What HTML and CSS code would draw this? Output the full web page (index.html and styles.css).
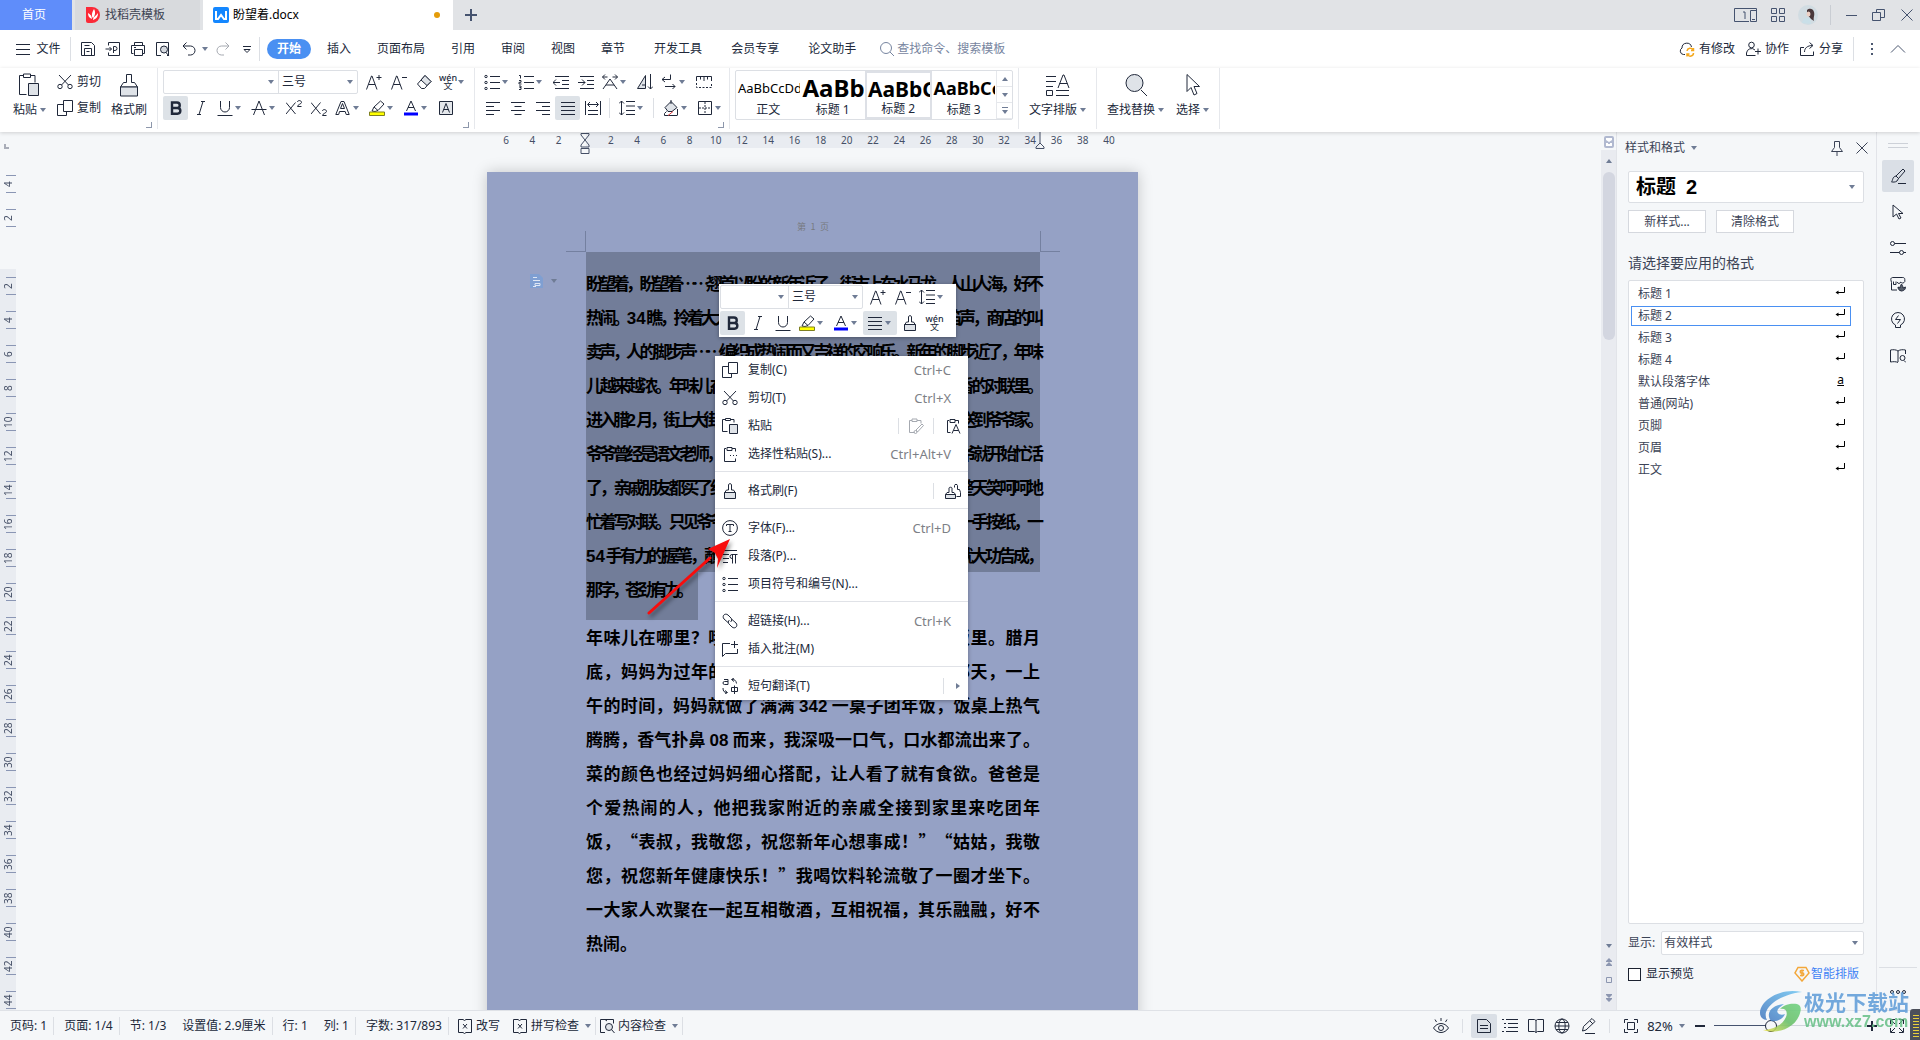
FILE: index.html
```html
<!DOCTYPE html>
<html lang="zh-CN">
<head>
<meta charset="utf-8">
<title>盼望着.docx</title>
<link rel="stylesheet" href="styles.css">
</head>
<body>
<svg class="sprite" aria-hidden="true">
  <symbol id="save" viewBox="0 0 16 16"><path d="M1.5 1.5h10l3 3v10h-13zM4.500 14.500v-7h7v7M4.500 4.500h5M6.500 10.500h3"/></symbol>
  <symbol id="export" viewBox="0 0 16 16"><path d="M3.500 4.500v-3h11v13h-11v-3M.5 8h6M4.500 6l2 2-2 2M8.500 12V5.500h1.500a2 2 0 0 1 0 4H8.500"/></symbol>
  <symbol id="print" viewBox="0 0 16 16"><path d="M4.500 4.500v-3h8v3M3.500 12.500h-2v-8h13v8h-2M4.500 8.500h8v6h-8zM4 6.500h2"/></symbol>
  <symbol id="preview" viewBox="0 0 16 16"><path d="M6 14.500H1.500v-13h12v13H12"/><circle cx="9" cy="8.500" r="3.500" fill="#d5d9df"/><path d="M11 11.500l3 3.500"/></symbol>
  <symbol id="undo" viewBox="0 0 16 16"><path d="M5.500 1.500L2 5l3.500 3.500M2 5h7.500a4.500 4.500 0 0 1 0 9H7"/></symbol>
  <symbol id="redo" viewBox="0 0 16 16"><path d="M10.500 1.500L14 5l-3.500 3.500M14 5H6.500a4.500 4.500 0 0 0 0 9H9"/></symbol>
  <symbol id="more" viewBox="0 0 16 16"><path d="M4 5.500h8M5 8.500h6l-3 3z"/></symbol>
  <symbol id="ham" viewBox="0 0 16 16"><path d="M1 3.500h14M1 8.500h14M1 13.500h14"/></symbol>
  <symbol id="mag" viewBox="0 0 16 16"><circle cx="7" cy="7" r="5.500"/><path d="M11 11l4 4"/></symbol>
  <symbol id="cloud" viewBox="0 0 16 16"><path d="M6 13.500H4.500A3.500 3.500 0 0 1 3 7a4.800 4.800 0 0 1 9.500-1"/><path stroke="#f5a81c" stroke-width="1.500" d="M8 10a3.200 3.200 0 0 1 6-1M14.500 12a3.200 3.200 0 0 1-6 1.500M14.500 7v2.500H12M8 15.500V13h2.500"/></symbol>
  <symbol id="people" viewBox="0 0 16 16"><circle cx="6.500" cy="4" r="2.800"/><path d="M10 9a5 5 0 0 0-8.500 3v2.500h9M13 7.500v6M10 10.500h6"/></symbol>
  <symbol id="share" viewBox="0 0 16 16"><path d="M5 6.500H1.500v8h13v-4M5.500 11c0-4 3-6.500 8-6.500M10.500 1.500l3.500 3-3.500 3"/></symbol>
  <symbol id="dots" viewBox="0 0 16 16"><path stroke-width="2" d="M7 3h2M7 8h2M7 13h2"/></symbol>
  <symbol id="up" viewBox="0 0 16 16"><path d="M1 11.500l7-7 7 7"/></symbol>
  <symbol id="paste" viewBox="0 0 24 24"><path d="M9.500 21.500h-7v-19h4M14 2.500h4v7M6.500 1h7v3.500h-7z"/><path fill="#dfe3e8" d="M11.500 10.500h10v12h-10z"/></symbol>
  <symbol id="paste-s" viewBox="0 0 16 16"><path d="M5.500 13.500h-5v-12h3M9 1.500h3v3M3.500.5h5v2h-5z"/><path fill="#dfe3e8" d="M7.500 6.500h8v9h-8z"/></symbol>
  <symbol id="cut" viewBox="0 0 16 16"><path d="M2 1l9.500 10M14 1L4.500 11"/><circle cx="3" cy="12.500" r="2.200"/><circle cx="13" cy="12.500" r="2.200"/></symbol>
  <symbol id="copy" viewBox="0 0 16 16"><path d="M6.500.5h9v11h-9zM6.500 4.500h-6v11h9v-4"/></symbol>
  <symbol id="brush" viewBox="0 0 24 24"><path d="M9.500 9.500v-8h5v8h3l3 4.500h-17l3-4.500z"/><path fill="#dfe3e8" d="M3.500 14h17v9h-17z"/></symbol>
  <symbol id="brush-s" viewBox="0 0 16 16"><path d="M6.500 7V1.500c0-1 3-1 3 0V7h2l2 3h-11l2-3z"/><path fill="#dfe3e8" d="M2.500 9.500h11v6h-11z"/></symbol>
  <symbol id="brush-2" viewBox="0 0 16 16"><path d="M9.500 4.500v-2c0-1.500 3-1.500 3 0v4h2l1 3v4h-4"/><path fill="#fff" d="M4 9.500V5c0-1 3-1 3 0v4.500h2l1.500 2H.5l1.500-2z"/><path fill="#dfe3e8" d="M.5 11.500h10v4H.5z"/></symbol>
  <symbol id="a-plus" viewBox="0 0 16 16"><path d="M.5 15.500L5.500 2h.5l5 13.500M2.500 10.500h6.500M10.500 3.500h5M13 1v5"/></symbol>
  <symbol id="a-minus" viewBox="0 0 16 16"><path d="M.5 15.500L5.500 2h.5l5 13.500M2.500 10.500h6.500M11 3.500h5"/></symbol>
  <symbol id="eraser" viewBox="0 0 16 16"><path d="M9 1.500L15 7.500 8.500 14.500h-3L1.500 10z"/><path fill="#dfe3e8" d="M9 1.500L15 7.500 11 11.500 5 6z"/></symbol>
  <symbol id="bold" viewBox="0 0 16 16"><path stroke-width="2.400" d="M4 2.500h5a2.700 2.700 0 0 1 0 5.500H4zM4 8h5.500a2.800 2.800 0 0 1 0 5.700H4z"/></symbol>
  <symbol id="italic" viewBox="0 0 16 16"><path d="M8 1.500h4M4 14.500h4M10 1.500L6 14.500"/></symbol>
  <symbol id="under" viewBox="0 0 16 16"><path d="M3.500 1v6.500a4.500 4.500 0 0 0 9 0V1M.5 15.500h15"/></symbol>
  <symbol id="strike" viewBox="0 0 16 16"><path d="M2.500 15L8 1l5.500 14M.5 9.500h15"/></symbol>
  <symbol id="sup" viewBox="0 0 16 16"><path d="M0 2.500L9.500 14M9.500 2.500L0 14M11.500 2c0-2 4-2 4 .5 0 1.500-4 2-4 4h4"/></symbol>
  <symbol id="sub" viewBox="0 0 16 16"><path d="M0 2.500L9.500 14M9.500 2.500L0 14M11.500 11c0-2 4-2 4 .5 0 1.500-4 2-4 4h4"/></symbol>
  <symbol id="a-out" viewBox="0 0 16 16"><path d="M.8 14.500L6 1.500h3l5.200 13h-3l-1-3H4.500l-.8 3zM5.500 8.500L7.500 3.500l2 5z"/></symbol>
  <symbol id="hilite" viewBox="0 0 16 16"><path d="M3 11l2-4 6.500-6 3.500 3-6 6.500-3 1zM5 7l4 3.500"/><path fill="#ff0" stroke="#7f8020" d="M.5 12h15v3.500H.5z"/></symbol>
  <symbol id="a-col" viewBox="0 0 16 16"><path d="M3.500 11L8 1l4.500 10M5 7.500h6"/><path stroke="#00f" stroke-width="3" d="M1 14h14"/></symbol>
  <symbol id="a-box" viewBox="0 0 16 16"><path fill="#e4e7eb" d="M1.500 1.500h13v13h-13z"/><path d="M4.500 12.500L8 3.500l3.500 9M5.500 9.500h5"/></symbol>
  <symbol id="bullets" viewBox="0 0 16 16"><circle cx="2" cy="2.500" r="1.200"/><circle cx="2" cy="8.500" r="1.200"/><circle cx="2" cy="14.500" r="1.200"/><path d="M6 2.500h10M6 8.500h10M6 14.500h10"/></symbol>
  <symbol id="numbers" viewBox="0 0 16 16"><path d="M1 1.500h1.500v3M1 6.500h2v1.800H1v1.700h2.500M1 12h2v1.500H1.500M3 13.500v2H1M6 2.500h10M6 8.500h10M6 14.500h10"/></symbol>
  <symbol id="outdent" viewBox="0 0 16 16"><path d="M2 2.500h14M9 6.500h7M9 10.500h7M2 14.500h14M0 8.500h7M3 5.500l-3 3 3 3"/></symbol>
  <symbol id="indent" viewBox="0 0 16 16"><path d="M2 2.500h14M9 6.500h7M9 10.500h7M2 14.500h14M0 8.500h7M4 5.500l3 3-3 3"/></symbol>
  <symbol id="a-arrows" viewBox="0 0 16 16"><path d="M1 15L8 5l7 10M4 11h8M.5 3h5M10.500 3h5M3 .5L.5 3 3 5.500M13 .5L15.500 3 13 5.500"/></symbol>
  <symbol id="a-down" viewBox="0 0 16 16"><path fill="#dfe3e8" d="M.5 14.500L8.500 1.500v13z"/><path d="M5 11h3.500M13.500 0v15M11 12.500l2.500 2.500 2.500-2.500"/></symbol>
  <symbol id="returns" viewBox="0 0 16 16"><path d="M9.500.5v5H1M4 3L1 5.500 4 8M4 12.500h10M11.500 10l2.500 2.500-2.500 2.500"/></symbol>
  <symbol id="tabs" viewBox="0 0 16 16"><path d="M.5 7V2.500h15V7M4.500 3v2.500M8 3v4M11.500 3v2.500"/><path stroke-dasharray="2 1.500" d="M.5 9v4.500h15V9"/></symbol>
  <symbol id="left" viewBox="0 0 16 16"><path d="M1 2.500h14M1 6.500h8M1 10.500h14M1 14.500h8"/></symbol>
  <symbol id="center" viewBox="0 0 16 16"><path d="M1 2.500h14M4.500 6.500h7M1 10.500h14M4.500 14.500h7"/></symbol>
  <symbol id="right" viewBox="0 0 16 16"><path d="M1 2.500h14M7 6.500h8M1 10.500h14M7 14.500h8"/></symbol>
  <symbol id="just" viewBox="0 0 16 16"><path d="M1 2.500h14M1 6.500h14M1 10.500h14M1 14.500h14"/></symbol>
  <symbol id="dist" viewBox="0 0 16 16"><path d="M.5 1v14M15.500 1v14M3 10.500h10M3 14.500h10M3 4.500h10M5 2L2.500 4.500 5 7M11 2l2.500 2.500L11 7"/></symbol>
  <symbol id="spacing" viewBox="0 0 16 16"><path d="M2.500 1v14M0 3.500L2.500 1 5 3.500M0 12.500L2.500 15 5 12.500M7 1.500h9M7 6h9M7 10.500h9M7 14.500h9"/></symbol>
  <symbol id="bucket" viewBox="0 0 16 16"><path fill="#dfe3e8" d="M2 7.500L8 1.500l6 6-5 4H5z"/><path d="M8 0v4M1.500 15.500v-2l2-2M14.500 15.500H1.500M14.500 9v6"/><path stroke="#e03c3c" d="M5 15.500l5-4"/></symbol>
  <symbol id="border" viewBox="0 0 16 16"><path d="M1.500 1.500h13v13h-13z"/><path stroke-dasharray="2 1" d="M8 2v12M2 8h12"/></symbol>
  <symbol id="layout" viewBox="0 0 24 24"><path d="M0 3.500h10M0 8.500h10M0 13.500h7M12 15l5-13h1l5 13M13.500 10.500h8M.5 17.500h6v5h-6zM10 17.500h13M10 22.500h13"/></symbol>
  <symbol id="find" viewBox="0 0 24 24"><circle cx="10.500" cy="10" r="8.500" fill="#dfe3e8"/><path d="M17 17l6 6"/></symbol>
  <symbol id="pointer" viewBox="0 0 24 24"><path d="M6 1.500v17l4-4 3 7.500 3-1.500-3-7h5.500z"/></symbol>
  <symbol id="para" viewBox="0 0 16 16"><path d="M1 2.500h14M1 6.500h6M1 10.500h6M1 14.500h5M10.500 15.500v-9M13.500 15.500v-9M15.500 6.500H10a2 2 0 0 0 0 4"/></symbol>
  <symbol id="paste-dot" viewBox="0 0 16 16"><path d="M4 2.500H2.500v13h11v-3M10 2.500h3.500v3M5 1.500h5v3H5zM8 9.500h1M11 9.500h1M14 9.500h1"/></symbol>
  <symbol id="paste-pen" viewBox="0 0 16 16"><path d="M4 2.500H1.500v12h5M9 2.500h4v3M4 1h5v2.500H4zM8 12l6-6 1.500 1.500-6 6.500z"/><circle cx="7.500" cy="14" r="1.500"/></symbol>
  <symbol id="paste-a" viewBox="0 0 16 16"><path d="M4 2.500H2.500v12h3M10 2.500h3.500v3M5 1.500h5v3H5zM7 15.500L11 6.500l4 9M8.500 12.500h5"/></symbol>
  <symbol id="font-t" viewBox="0 0 16 16"><circle cx="8" cy="8" r="7.400"/><path d="M4.500 6v-1.500h7V6M8 4.500v7M6.500 11.500h3"/></symbol>
  <symbol id="link" viewBox="0 0 16 16"><path d="M6 9.500L2 6C-.5 3 3-.5 6 2l3 3c1 1 1 3-.5 4M10 6.500l4 3.500c2.500 3-1 6.500-4 4l-3-3c-1-1-1-3 .5-4"/></symbol>
  <symbol id="note" viewBox="0 0 16 16"><path d="M8 2.500H.5v13l3-3h12V8M12.500 0v7M9 3.500h7"/></symbol>
  <symbol id="trans" viewBox="0 0 16 16"><path d="M2 1.500h4v5H2.500a1.500 1.500 0 0 1 0-3H6M10 1.500c3 0 4 1 4.500 4M12 0l-2.500 1.500L12 3.500M1 10c0 3 1 4.500 4 4.500M3 12.500l2.500 2-2.500 1.500M9.500 9.500h6v4h-6zM12.500 7.500V16"/></symbol>
  <symbol id="pin" viewBox="0 0 16 16"><path d="M5.500 1.500h5v6l3 4h-11l3-4zM8 11.500V16"/></symbol>
  <symbol id="x" viewBox="0 0 16 16"><path d="M2.500 2.500l11 11M13.500 2.500l-11 11"/></symbol>
  <symbol id="pen" viewBox="0 0 16 16"><path d="M6 8l7-7 2 2-6.500 7.500zM6 8l2.500 2.500L7 13c-2 1.500-4 1-5.500 1 1.500-1.500.5-5 4.500-6M8 15.500h8"/></symbol>
  <symbol id="sliders" viewBox="0 0 16 16"><circle cx="2.500" cy="3.500" r="2"/><circle cx="11.500" cy="12.500" r="2"/><path d="M4.500 3.500H16M0 12.500h9.500M13.500 12.500H16"/></symbol>
  <symbol id="shop" viewBox="0 0 16 16"><path d="M1.500 6.500v7.500h5.500M1.500 6.500L.8 3.500c0-1.500 1-2 2-2h10c1 0 2 .5 2 2v2c-1 2-3 2-4 .5-1 2-3 2-3.500 0M3.500 5.500v3h2.500v-3"/><path fill="#59606c" d="M11.500 15c-3-.5-3.500-2.500-3.500-4l2 1c0-2 1-3 1.500-4 .5 1 1.500 2 1.500 4l2.500-1c0 1.500-.5 3.500-4 4z"/></symbol>
  <symbol id="bulb" viewBox="0 0 16 16"><path d="M5.500 13v2.500h5V13a6.500 6.500 0 1 0-5 0zM8.500 3.500L5.500 7.500h5L7.500 11.500"/></symbol>
  <symbol id="book-s" viewBox="0 0 16 16"><path d="M8 3v11M8 3C6 1.500 3 1.500.5 2v12c3-.5 5.500-.5 7.500.5M8 3c2-1.500 5-1.500 7.500-1v4"/><circle cx="12.500" cy="10" r="2.500"/><path d="M14 12.500l2 2"/></symbol>
  <symbol id="word-x" viewBox="0 0 16 16"><path d="M6 1.500H1.500v13H6l1.500 1L9 14.500h5.500v-13H9L7.500 2.500zM6 6l4 4.500M10 6l-4 4.500"/></symbol>
  <symbol id="word-m" viewBox="0 0 16 16"><path d="M6 14.500H1.500v-13h13v4M6 1.500l2 1.500"/><circle cx="10" cy="9" r="3.500" fill="#dfe3e8"/><path d="M12.500 11.500l3 3.500"/></symbol>
  <symbol id="eye" viewBox="0 0 16 16"><path d="M.5 10c4-6 11-6 15 0-4 6-11 6-15 0zM8 3V0M3.500 4L2 1.500M12.500 4L14 1.500"/><circle cx="8" cy="10" r="2.500"/></symbol>
  <symbol id="doc" viewBox="0 0 16 16"><path d="M1.500 1.500h9l4 4v9h-13zM4 7.500h8M4 10.500h8"/></symbol>
  <symbol id="outline" viewBox="0 0 16 16"><path d="M0 1.500h2M4 1.500h12M2 5.500h2M6 5.500h10M2 9.500h2M6 9.500h10M0 13.500h2M4 13.500h12"/></symbol>
  <symbol id="book" viewBox="0 0 16 16"><path d="M8 2.500v12M8 2.500L6.500 1.500h-6v12h6l1.500 1 1.500-1h6v-12h-6z"/></symbol>
  <symbol id="globe" viewBox="0 0 16 16"><circle cx="8" cy="8" r="7"/><ellipse cx="8" cy="8" rx="3.200" ry="7"/><path d="M1 8h14M2 4.500h12M2 11.500h12"/></symbol>
  <symbol id="pen-b" viewBox="0 0 16 16"><path d="M2.500 13l1-4.500 8.500-8 3 3L6 12zM5 15.500h10M10 3l3 3"/></symbol>
  <symbol id="fit" viewBox="0 0 16 16"><path d="M1.500 5V1.500H5M11 1.500h3.500V5M14.500 11v3.500H11M5 14.500H1.500V11M4.500 4.500h7v7h-7z"/></symbol>
  <symbol id="expand" viewBox="0 0 16 16"><path d="M1.500 6V1.500H6M10 1.500h4.500V6M14.500 10v4.500H10M6 14.500H1.500V10M2 2l4 4M14 2l-4 4M14 14l-4-4M2 14l4-4"/></symbol>
  <symbol id="ret" viewBox="0 0 10 10"><path stroke="#000" d="M9.500 1v5.500H2"/><path fill="#000" stroke="none" d="M3.500 4.500v4L.5 6.500z"/></symbol>
</svg>

<header class="tabs">
  <button class="tab home">首页</button>
  <button class="tab tpl"><svg class="i" viewBox="0 0 16 16"><path fill="#fb2a38" stroke="none" d="M1 0h6a8 8 0 0 1 0 16H3a2 2 0 0 1-2-2z"/><path fill="#fff" stroke="none" d="M9 2c2 3 1 7-1 9-2-2-1-6 1-9zM3 6c2 1 4 3 4 6-3-1-4-3-4-6zM13 6c0 4-2 6-5 7 0-3 3-4 5-7z"/></svg>找稻壳模板</button>
  <button class="tab doc"><svg class="i" viewBox="0 0 16 16"><rect width="16" height="16" rx="2" fill="#1487ff" stroke="none"/><path stroke="#fff" stroke-width="2" d="M3 4v8h2l3-4 3 4h2V4"/></svg><span>盼望着.docx</span><i class="unsaved"></i></button>
  <button class="plus" aria-label="新建"><svg class="i" viewBox="0 0 16 16"><path stroke-width="2" d="M2 8h12M8 2v12"/></svg></button>
  <div class="window">
    <svg class="wide" viewBox="0 0 24 16"><path d="M15 14.500H.5v-13h22V4M9 5h2v7M16.500 3.500h6v11h-6zM18 12.500h3"/></svg>
    <svg class="i" viewBox="0 0 16 16"><path d="M1.500 1.500h5v5h-5zM9.500 1.500h5v5h-5zM1.500 9.500h5v5h-5zM9.500 9.500h5v5h-5z"/></svg>
    <svg class="avatar" viewBox="0 0 20 20"><circle cx="10" cy="10" r="10" fill="#d1dce2" stroke="none"/><path fill="#4a383b" stroke="none" d="M9 5c2-2 6-2 7 2 1 4-1 5 0 9l-3-2-4-5z"/><ellipse cx="10.500" cy="9" rx="2" ry="2.500" fill="#eccfc4" stroke="none"/><path fill="#c9dfe8" stroke="none" d="M4 18c1-5 4-6 8-5l1 6z"/></svg>
    <i class="vr"></i>
    <svg class="i" viewBox="0 0 16 16"><path d="M3 8.500h11"/></svg>
    <svg class="i" viewBox="0 0 16 16"><path d="M1.500 5.500h8v8h-8zM5.500 5.500v-3h8v8h-4"/></svg>
    <svg class="i"><use href="#x"/></svg>
  </div>
</header>

<nav class="menu">
  <button class="file"><svg class="i"><use href="#ham"/></svg>文件</button><i class="vr"></i>
  <div class="quick">
    <button class="q"><svg class="i"><use href="#save"/></svg></button><button class="q"><svg class="i"><use href="#export"/></svg></button><button class="q"><svg class="i"><use href="#print"/></svg></button><button class="q"><svg class="i"><use href="#preview"/></svg></button><button class="q dd"><svg class="i"><use href="#undo"/></svg><i class="caret"></i></button><button class="q dim"><svg class="i"><use href="#redo"/></svg></button><button class="q"><svg class="i"><use href="#more"/></svg></button>
  </div><i class="vr"></i>
  <div class="menu-tabs">
    <button class="on">开始</button><button>插入</button><button>页面布局</button><button>引用</button><button>审阅</button><button>视图</button><button>章节</button><button>开发工具</button><button>会员专享</button><button>论文助手</button>
  </div>
  <label class="search"><svg class="i"><use href="#mag"/></svg><input type="text" placeholder="查找命令、搜索模板"></label>
  <div class="account">
    <button><svg class="i"><use href="#cloud"/></svg>有修改</button><button><svg class="i"><use href="#people"/></svg>协作</button><button><svg class="i"><use href="#share"/></svg>分享</button><i class="vr"></i><svg class="i"><use href="#dots"/></svg><svg class="i"><use href="#up"/></svg>
  </div>
</nav>

<section class="ribbon">
  <div class="group clip">
    <button class="big paste"><svg class="b"><use href="#paste"/></svg><span>粘贴<i class="caret"></i></span></button>
    <div class="pair"><button><svg class="i"><use href="#cut"/></svg>剪切</button><button><svg class="i"><use href="#copy"/></svg>复制</button></div>
    <button class="big"><svg class="b"><use href="#brush"/></svg><span>格式刷</span></button>
    <i class="corner"></i>
  </div>
  <div class="group rows">
    <div class="row">
      <div class="combo fonts"><select class="face" aria-label="字体"><option></option></select><i class="caret"></i><select class="size" aria-label="字号"><option>三号</option></select><i class="caret"></i></div>
      <button class="t"><svg class="i"><use href="#a-plus"/></svg></button><button class="t"><svg class="i"><use href="#a-minus"/></svg></button><button class="t"><svg class="i"><use href="#eraser"/></svg></button><button class="t dd"><span class="wen"><b>wén</b>文</span><i class="caret"></i></button>
    </div>
    <div class="row">
      <button class="t on"><svg class="i"><use href="#bold"/></svg></button><button class="t"><svg class="i"><use href="#italic"/></svg></button><button class="t dd"><svg class="i"><use href="#under"/></svg><i class="caret"></i></button><button class="t dd"><svg class="i"><use href="#strike"/></svg><i class="caret"></i></button><button class="t"><svg class="i"><use href="#sup"/></svg></button><button class="t"><svg class="i"><use href="#sub"/></svg></button><button class="t dd"><svg class="i"><use href="#a-out"/></svg><i class="caret"></i></button><button class="t dd"><svg class="i"><use href="#hilite"/></svg><i class="caret"></i></button><button class="t dd"><svg class="i"><use href="#a-col"/></svg><i class="caret"></i></button><button class="t"><svg class="i"><use href="#a-box"/></svg></button>
    </div>
    <i class="corner"></i>
  </div>
  <div class="group rows">
    <div class="row">
      <button class="t dd"><svg class="i"><use href="#bullets"/></svg><i class="caret"></i></button><button class="t dd"><svg class="i"><use href="#numbers"/></svg><i class="caret"></i></button><button class="t"><svg class="i"><use href="#outdent"/></svg></button><button class="t"><svg class="i"><use href="#indent"/></svg></button><button class="t dd"><svg class="i"><use href="#a-arrows"/></svg><i class="caret"></i></button><button class="t"><svg class="i"><use href="#a-down"/></svg></button><button class="t dd"><svg class="i"><use href="#returns"/></svg><i class="caret"></i></button><button class="t"><svg class="i"><use href="#tabs"/></svg></button>
    </div>
    <div class="row">
      <button class="t"><svg class="i"><use href="#left"/></svg></button><button class="t"><svg class="i"><use href="#center"/></svg></button><button class="t"><svg class="i"><use href="#right"/></svg></button><button class="t on"><svg class="i"><use href="#just"/></svg></button><button class="t"><svg class="i"><use href="#dist"/></svg></button><i class="gap"></i><button class="t dd"><svg class="i"><use href="#spacing"/></svg><i class="caret"></i></button><i class="gap"></i><button class="t dd"><svg class="i"><use href="#bucket"/></svg><i class="caret"></i></button><button class="t dd"><svg class="i"><use href="#border"/></svg><i class="caret"></i></button>
    </div>
    <i class="corner"></i>
  </div>
  <div class="group">
    <div class="gallery">
      <button class="card body"><span>AaBbCcDd</span><em>正文</em></button><button class="card h1"><span>AaBbCc</span><em>标题 1</em></button><button class="card h2 on"><span>AaBbCc</span><em>标题 2</em></button><button class="card h3"><span>AaBbCc</span><em>标题 3</em></button>
      <div class="steps"><button><i class="caret flip"></i></button><button><i class="caret"></i></button><button class="all"><i class="caret"></i></button></div>
    </div>
  </div>
  <div class="group wide-pad"><button class="big"><svg class="b"><use href="#layout"/></svg><span>文字排版<i class="caret"></i></span></button></div>
  <div class="group wide-pad"><button class="big"><svg class="b"><use href="#find"/></svg><span>查找替换<i class="caret"></i></span></button><button class="big sel"><svg class="b"><use href="#pointer"/></svg><span>选择<i class="caret"></i></span></button></div>
</section>

<div class="work">
  <div class="vruler"><div class="tab-stop"></div>
    <span class="out">4</span><span class="out">2</span><span class="zero"></span><span>2</span><span>4</span><span>6</span><span>8</span><span>10</span><span>12</span><span>14</span><span>16</span><span>18</span><span>20</span><span>22</span><span>24</span><span>26</span><span>28</span><span>30</span><span>32</span><span>34</span><span>36</span><span>38</span><span>40</span><span>42</span><span>44</span>
  </div>
  <main class="canvas">
    <div class="hruler">
      <span>6</span><span>4</span><span>2</span><span><svg class="mark" viewBox="0 0 10 22"><path d="M1 1.500h8v1.500L5 8 1 3zM5 8l4 5v2H1v-2zM1 16.500h8v5H1z"/></svg></span><span>2</span><span>4</span><span>6</span><span>8</span><span>10</span><span>12</span><span>14</span><span>16</span><span>18</span><span>20</span><span>22</span><span>24</span><span>26</span><span>28</span><span>30</span><span>32</span><span>34</span><span>36</span><span>38</span><span>40</span>
      <svg class="mark end" viewBox="0 0 10 22"><path d="M5 0v11l4 4v1.500H1V15l4-4"/></svg>
    </div>
    <article class="page">
      <div class="page-head"><span>第&ensp;1&ensp;页</span></div>
      <div class="picked">
        <p>盼望着，盼望着……翘首以盼的新年近了，街市上车水马龙，人山人海，好不</p>
        <p>热闹。<b class="num">34</b> 瞧，拎着大大小小年货的人们，欢笑声、鞭炮声、笛声，商店的叫</p>
        <p>卖声，人的脚步声……编织成热闹而又吉祥的交响乐。新年的脚步近了，年味</p>
        <p>儿越来越浓。年味儿在哪里？哦，在爷爷写的那一副散发着墨香的对联里。</p>
        <p>进入腊<b class="num">2</b> 月，街上大街小巷都热闹起来，左邻右舍都把买的红纸送到爷爷家。</p>
        <p>爷爷曾经是语文老师，写得一手的好字，每年到了过年的时候爷爷就开始忙活</p>
        <p>了，亲戚朋友都买了红纸来请爷爷帮忙写上一副副对联，爷爷整天笑呵呵地</p>
        <p>忙着写对联。只见爷爷把红纸平铺在桌子上，戴上了老花镜，一手按纸，一</p>
        <p><b class="num">54</b> 手有力的握笔，蘸上墨水，一气呵成，不一会儿一副对联就大功告成，</p>
      </div>
      <p class="picked last">那字，苍劲有力。</p>
      <div class="plain">
        <p>年味儿在哪里？哦，在妈妈做的那香喷喷的年夜饭里。腊月</p>
        <p>底，妈妈为过年的饭菜忙个不停。到了大年三十那天，一上</p>
        <p>午的时间，妈妈就做了满满 <b class="num">342</b> 一桌子团年饭，饭桌上热气</p>
        <p>腾腾，香气扑鼻 <b class="num">08</b> 而来，我深吸一口气，口水都流出来了。</p>
        <p>菜的颜色也经过妈妈细心搭配，让人看了就有食欲。爸爸是</p>
        <p>个爱热闹的人，他把我家附近的亲戚全接到家里来吃团年</p>
        <p>饭，“表叔，我敬您，祝您新年心想事成！”“姑姑，我敬</p>
        <p>您，祝您新年健康快乐！”我喝饮料轮流敬了一圈才坐下。</p>
        <p>一大家人欢聚在一起互相敬酒，互相祝福，其乐融融，好不</p>
        <p class="short">热闹。</p>
      </div>
      <button class="para-tag" aria-label="段落布局"><svg viewBox="0 0 13 14"><path fill="#7f9fd2" stroke="none" d="M0 0h9l4 4v10H0z"/><path stroke="#dde6f4" d="M3 3.500h4M3 6.500h7M5 9.500h5v2H5zM3 12.500h3"/></svg><i class="caret"></i></button>

      <div class="mini">
        <div class="row"><div class="combo"><select class="face" aria-label="字体"><option></option></select><i class="caret"></i><select class="size" aria-label="字号"><option>三号</option></select><i class="caret"></i></div><button class="t"><svg class="i"><use href="#a-plus"/></svg></button><button class="t"><svg class="i"><use href="#a-minus"/></svg></button><button class="t dd"><svg class="i"><use href="#spacing"/></svg><i class="caret"></i></button></div>
        <div class="row"><button class="t on"><svg class="i"><use href="#bold"/></svg></button><button class="t"><svg class="i"><use href="#italic"/></svg></button><button class="t"><svg class="i"><use href="#under"/></svg></button><button class="t dd"><svg class="i"><use href="#hilite"/></svg><i class="caret"></i></button><button class="t dd"><svg class="i"><use href="#a-col"/></svg><i class="caret"></i></button><button class="t dd on"><svg class="i"><use href="#just"/></svg><i class="caret"></i></button><button class="t"><svg class="i"><use href="#brush-s"/></svg></button><button class="t"><span class="wen"><b>wén</b>文</span></button></div>
      </div>

      <div class="context">
        <button class="m"><svg class="i"><use href="#copy"/></svg><span>复制(C)</span><kbd>Ctrl+C</kbd></button>
        <button class="m"><svg class="i"><use href="#cut"/></svg><span>剪切(T)</span><kbd>Ctrl+X</kbd></button>
        <div class="m"><svg class="i"><use href="#paste-s"/></svg><span>粘贴</span><i class="vr"></i><button class="side dim"><svg class="i"><use href="#paste-pen"/></svg></button><i class="vr"></i><button class="side"><svg class="i"><use href="#paste-a"/></svg></button></div>
        <button class="m"><svg class="i"><use href="#paste-dot"/></svg><span>选择性粘贴(S)...</span><kbd>Ctrl+Alt+V</kbd></button>
        <hr>
        <div class="m"><svg class="i"><use href="#brush-s"/></svg><span>格式刷(F)</span><i class="vr"></i><button class="side"><svg class="i"><use href="#brush-2"/></svg></button></div>
        <hr>
        <button class="m"><svg class="i"><use href="#font-t"/></svg><span>字体(F)...</span><kbd>Ctrl+D</kbd></button>
        <button class="m"><svg class="i"><use href="#para"/></svg><span>段落(P)...</span></button>
        <button class="m"><svg class="i"><use href="#bullets"/></svg><span>项目符号和编号(N)...</span></button>
        <hr>
        <button class="m"><svg class="i"><use href="#link"/></svg><span>超链接(H)...</span><kbd>Ctrl+K</kbd></button>
        <button class="m"><svg class="i"><use href="#note"/></svg><span>插入批注(M)</span></button>
        <hr>
        <button class="m"><svg class="i"><use href="#trans"/></svg><span>短句翻译(T)</span><i class="vr"></i><i class="more"></i></button>
      </div>

      <svg class="pointer" viewBox="0 0 100 90"><path d="M9 78L70 23" stroke="#f80d0d" stroke-width="3" stroke-linecap="round"/><path fill="#f80d0d" stroke="none" d="M90 4L68 14l7 4 3 6-1 9z"/></svg>
    </article>
  </main>

  <div class="scroll">
    <svg class="chip" viewBox="0 0 10 12"><rect width="10" height="12" rx="2" fill="#b1b9d0" stroke="none"/><path fill="#fff" stroke="none" d="M2 2h6v2L5 6 2 4zM2 7h2v1h2V7h2v3H2z"/></svg>
    <div class="bar"><i class="caret flip"></i><div class="thumb"></div><div class="jump"><i class="caret"></i><svg viewBox="0 0 8 8"><path fill="#8c96b0" stroke="none" d="M4 0l3 3H1zM1 3h6v1H1zM4 4l3 3H1zM1 7h6v1H1z"/></svg><svg viewBox="0 0 8 8"><path stroke="#8c96b0" d="M1.500 1.500h5v5h-5z"/></svg><svg viewBox="0 0 8 8"><path fill="#8c96b0" stroke="none" d="M1 0h6v1H1zM1 1h6L4 4zM1 4h6v1H1zM1 5h6L4 8z"/></svg></div></div>
  </div>

  <aside class="panel">
    <div class="panel-top"><button>样式和格式<i class="caret"></i></button><svg class="i"><use href="#pin"/></svg><svg class="i"><use href="#x"/></svg></div>
    <div class="combo current"><select aria-label="当前样式"><option>标题&ensp;2</option></select><i class="caret"></i></div>
    <div class="actions"><button>新样式...</button><button>清除格式</button></div>
    <h2>请选择要应用的格式</h2>
    <ul class="styles">
      <li>标题 1<svg><use href="#ret"/></svg></li><li class="on">标题 2<svg><use href="#ret"/></svg></li><li>标题 3<svg><use href="#ret"/></svg></li><li>标题 4<svg><use href="#ret"/></svg></li><li>默认段落字体<u>a</u></li><li>普通(网站)<svg><use href="#ret"/></svg></li><li>页脚<svg><use href="#ret"/></svg></li><li>页眉<svg><use href="#ret"/></svg></li><li>正文<svg><use href="#ret"/></svg></li>
    </ul>
    <div class="show"><label for="show">显示:</label><div class="combo"><select id="show"><option>有效样式</option></select><i class="caret"></i></div></div>
    <div class="foot"><label><input type="checkbox">显示预览</label><a href="#"><svg class="i" viewBox="0 0 16 16"><path stroke="#f3a73a" stroke-width="1.500" d="M4 1.500h8L15 7l-7 8-7-8z"/><path stroke="#f3a73a" stroke-width="1.500" d="M10 4.500H7c-1 0-1 2.500 0 2.500h2c1 0 1 2.500 0 2.500H6M8 3.500v7"/></svg>智能排版</a></div>
  </aside>

  <aside class="rail">
    <i class="grip"></i>
    <button class="on"><svg class="i"><use href="#pen"/></svg></button><button><svg class="i" viewBox="0 0 16 16"><path d="M3 1v12l3.500-3 2.500 5 2-1-2.500-4.500H13z"/></svg></button><button><svg class="i"><use href="#sliders"/></svg></button><button><svg class="i"><use href="#shop"/></svg></button><button><svg class="i"><use href="#bulb"/></svg></button><button><svg class="i"><use href="#book-s"/></svg></button>
    <button class="rest"><svg class="i" viewBox="0 0 16 16"><circle cx="2" cy="8" r="1.500"/><circle cx="8" cy="8" r="1.500"/><circle cx="14" cy="8" r="1.500"/></svg></button>
  </aside>
</div>

<footer class="status">
  <span>页码: 1</span><i class="vr"></i><span>页面: 1/4</span><i class="vr"></i><span>节: 1/3</span><span>设置值: 2.9厘米</span><i class="vr"></i><span>行: 1</span><span>列: 1</span><i class="vr"></i><span>字数: 317/893</span><i class="vr"></i>
  <button><svg class="i"><use href="#word-x"/></svg>改写</button><button><svg class="i"><use href="#word-x"/></svg>拼写检查<i class="caret"></i></button><i class="vr tight"></i><button><svg class="i"><use href="#word-m"/></svg>内容检查<i class="caret"></i></button><i class="vr"></i>
  <div class="views">
    <button><svg class="i"><use href="#eye"/></svg></button><i class="vr"></i><button class="on"><svg class="i"><use href="#doc"/></svg></button><button><svg class="i"><use href="#outline"/></svg></button><button><svg class="i"><use href="#book"/></svg></button><button><svg class="i"><use href="#globe"/></svg></button><button><svg class="i"><use href="#pen-b"/></svg></button><i class="vr"></i><button><svg class="i"><use href="#fit"/></svg></button><button class="zoom">82%<i class="caret"></i></button>
    <button class="step" aria-label="缩小"><svg class="i" viewBox="0 0 16 16"><path stroke-width="2" d="M3 8h10"/></svg></button><input type="range" min="0" max="100" value="39" aria-label="显示比例"><button class="step" aria-label="放大"><svg class="i" viewBox="0 0 16 16"><path stroke-width="2" d="M3 8h10M8 3v10"/></svg></button><button class="full"><svg class="i"><use href="#expand"/></svg></button>
  </div>
</footer>

<div class="brand">
  <svg viewBox="0 0 44 42"><defs><linearGradient id="bl" x1="0" y1="1" x2="1" y2="0"><stop offset="0" stop-color="#3f74bd"/><stop offset="1" stop-color="#6fc6f3"/></linearGradient><linearGradient id="gr" x1="0" y1="1" x2="1" y2="0"><stop offset="0" stop-color="#f0e34c"/><stop offset=".5" stop-color="#62bd63"/><stop offset="1" stop-color="#6ad07d"/></linearGradient></defs><path fill="url(#bl)" stroke="none" d="M43 2C22-3 1 10 1 23c0 4 3 7 7 7C2 20 17 5 43 2zM12 31c-6-8 1-16 13-17-6 4-8 7-6 9 1 2 5 2 7 1-2 5-8 8-14 7z"/><path fill="url(#gr)" stroke="none" d="M4 40c9 0 20-5 23-13 2-5 0-9-6-8 4-5 12-6 17-5 4 1 5 5 2 12-5 12-22 19-36 14z"/></svg>
  <div><strong>极光下载站</strong><span>www.xz7.com</span></div>
</div>
<div class="meter"></div>
</body>
</html>
```
FILE: styles.css
```css
* { box-sizing: border-box; }
body {
  margin: 0; height: 100vh; display: flex; flex-direction: column; overflow: hidden;
  background: #f5f7f9; color: #20283a;
  font: 12px/16px "Noto Sans", "Noto Sans CJK SC", sans-serif;
}
button, input, select { font: inherit; color: inherit; border: 0; background: none; padding: 0; margin: 0; }
button { display: flex; align-items: center; justify-content: center; white-space: nowrap; }
select { appearance: none; min-width: 0; outline: 0; }
p, h2, ul { margin: 0; padding: 0; }
svg { fill: none; stroke: currentColor; flex: none; }
.sprite { position: absolute; width: 0; height: 0; }
.i { width: 16px; height: 16px; }
.b { width: 24px; height: 24px; }
.caret { flex: none; width: 0; height: 0; border: 3px solid transparent; border-top: 4px solid #6f7c95; border-bottom: 0; }
.caret.flip { transform: rotate(180deg); }
.vr { flex: none; width: 1px; background: #dcdfe4; }
.dim { color: #a5a9b0; }

/* Title tabs */
.tabs { flex: none; display: flex; height: 30px; background: #e1e3e6; }
.tab { gap: 6px; }
.home { width: 72px; background: #5f8dfa; color: #fff; margin-right: 3px; padding-right: 4px; }
.tpl { width: 125px; background: #d8dadd; justify-content: flex-start; padding-left: 10px; color: #3d4352; margin-right: 3px; gap: 4px; }
.doc { width: 250px; background: #fff; justify-content: flex-start; padding: 0 13px 0 10px; gap: 4px; color: #000; }
.unsaved { width: 6px; height: 6px; border-radius: 50%; background: #e49c09; margin-left: auto; }
.plus { width: 36px; color: #45536f; }
.window { margin-left: auto; display: flex; align-items: center; gap: 12px; padding-right: 5px; color: #45536f; }
.window .vr { height: 20px; background: #c9cdd3; }
.wide { width: 24px; height: 16px; }
.avatar { width: 20px; height: 20px; }

/* Menu row */
.menu { flex: none; display: flex; align-items: center; height: 38px; background: #fff; }
.menu .vr { height: 24px; }
.file { gap: 5px; width: 70px; padding-left: 6px; }
.quick { display: flex; padding-left: 4px; }
.q { width: 25px; height: 24px; }
.q.dd { width: 39px; gap: 5px; }
.quick .dim { margin: 0 -1px 0 -4px; }
.menu-tabs { display: flex; gap: 6px; padding-left: 7px; }
.menu-tabs button { height: 20px; padding: 0 10px; }
.menu-tabs button:nth-child(n+8) { margin-left: 3px; }
.menu-tabs .on { background: #4a90f2; color: #fff; border-radius: 10px; font-weight: 600; }
.search { display: flex; align-items: center; color: #7785a0; margin-left: 13px; }
.search .i { margin-right: 2px; }
.search input { width: 120px; outline: 0; }
.search input::placeholder { color: #7785a0; opacity: 1; }
.account { margin-left: auto; display: flex; align-items: center; gap: 10px; padding-right: 14px; }
.account button { gap: 4px; }
.account > .i { color: #4c5870; }

/* Ribbon */
.ribbon { flex: none; display: flex; height: 64px; background: #fff; box-shadow: 0 1px 4px rgba(0,0,0,.16); position: relative; z-index: 3; }
.group { position: relative; display: flex; padding: 2px 5px 0; border-right: 1px solid #e6e8ec; height: 61px; }
.rows { flex-direction: column; gap: 2px; padding-right: 4px; }
.rows + .rows { padding-right: 2px; }
.row { display: flex; align-items: center; height: 24px; }
.t { width: 25px; height: 24px; border-radius: 2px; }
.t.dd { width: 34px; gap: 2px; justify-content: flex-start; padding-left: 4px; }
.t.on { background: #dde2e7; }
.gap { width: 10px; height: 20px; background: linear-gradient(#dcdfe4, #dcdfe4) 4px 0 / 1px 100% no-repeat; }
.corner { position: absolute; right: 5px; bottom: 1px; width: 6px; height: 6px; border: solid #8d97ab; border-width: 0 1px 1px 0; }
.combo { display: flex; align-items: center; height: 24px; padding-right: 4px; background: #fff; border: 1px solid #dcdfe4; border-radius: 2px; }
.combo select { flex: 1; height: 100%; }
.combo .size { border-left: 1px solid #dcdfe4; padding-left: 3px; margin-left: 4px; }
.fonts { width: 195px; margin-right: 3px; }
.fonts .face { flex: none; width: 104px; }
.wen { display: flex; flex-direction: column; align-items: center; width: 16px; font-size: 9px; line-height: 8px; }
.wen b { font-size: 9px; font-weight: 500; }
.clip { width: 158px; padding-left: 8px; }
.big { flex-direction: column; justify-content: flex-start; padding-top: 3px; gap: 5px; }
.big span { display: flex; align-items: center; gap: 3px; }
.paste { width: 40px; align-items: flex-start; padding-left: 5px; margin-right: 9px; }
.paste .b { margin-left: 4px; }
.pair { display: flex; flex-direction: column; gap: 2px; width: 54px; }
.pair button { height: 24px; gap: 4px; justify-content: flex-start; }
.gallery { display: flex; width: 278px; height: 50px; border: 1px solid #dcdfe4; border-radius: 2px; overflow: hidden; }
.card { flex: 1; min-width: 0; flex-direction: column; align-items: center; justify-content: space-between; border: 1px solid transparent; overflow: hidden; }
.card.on { border: 2px solid #dde0e6; }
.card span { align-self: stretch; height: 30px; line-height: 32px; padding-left: 1px; text-align: left; overflow: hidden; color: #000; font-weight: 700; }
.card em { font-style: normal; }
.card.body span { font-size: 13px; font-weight: 400; }
.h1 span { font-size: 24px; }
.h2 span { font-size: 21px; }
.h3 span { font-size: 18px; }
.steps { display: flex; flex-direction: column; width: 16px; border-left: 1px solid #e6e8ec; }
.steps button { flex: 1; flex-direction: column; gap: 2px; border-bottom: 1px solid #e6e8ec; }
.steps .all::before { content: ""; width: 6px; height: 1px; background: #6f7c95; }
.wide-pad { padding: 2px 10px 0; }
.sel { margin-left: 12px; }

/* Work area */
.work { flex: 1; min-height: 0; display: flex; }
.vruler { flex: none; width: 16px; overflow: hidden; font-size: 10px; color: #454f66; }
.vruler span { position: relative; display: flex; align-items: center; justify-content: center; height: 34px; writing-mode: vertical-rl; transform: rotate(180deg); background: linear-gradient(#8a96b4, #8a96b4) 0 8px / 10px 1px no-repeat, linear-gradient(#8a96b4, #8a96b4) 0 25px / 10px 1px no-repeat #e9ecf1; }
.vruler .out { background-color: #f5f7f9; }
.vruler .zero { background: linear-gradient(#8a96b4, #8a96b4) 0 8px / 10px 1px no-repeat, linear-gradient(#8a96b4, #8a96b4) 0 25px / 10px 1px no-repeat, linear-gradient(#e9ecf1 16px, #8a96b4 16px, #8a96b4 17px, #f5f7f9 17px); }
.tab-stop { height: 35px; }
.tab-stop::before { content: ""; display: block; width: 7px; height: 17px; margin-left: 4px; background: linear-gradient(#a9adb8, #a9adb8) 0 12px / 2px 5px no-repeat, linear-gradient(#a9adb8, #a9adb8) 0 100% / 5px 2px no-repeat; }
.canvas { flex: 1; min-width: 0; padding-left: 8px; overflow: hidden; }
.hruler { position: relative; display: grid; grid-template-columns: repeat(24, 1fr); width: 651px; height: 16px; margin: 0 auto 24px; padding: 0 16px 0 6px; text-align: center; font-size: 10px; color: #454f66; background: linear-gradient(#e9ecf1, #e9ecf1) 99px 0 / 454px 100% no-repeat; }
.mark { width: 10px; height: 22px; }
.mark.end { position: absolute; left: 548px; top: 0; }
.page { position: relative; width: 651px; height: 1100px; margin: 0 auto; padding: 0 98px 0 99px; background: #95a1c5; box-shadow: 0 0 14px rgba(0,0,0,.2); color: #000; font: 700 17px/34px "Noto Sans CJK SC", sans-serif; }
.page-head { height: 80px; padding-top: 47px; text-align: center; color: #777a80; font: 9px/16px "Noto Sans CJK SC", sans-serif; position: relative; }
.page-head::before, .page-head::after { content: ""; position: absolute; bottom: 0; width: 19px; height: 20px; border-bottom: 1px solid #7480a0; }
.page-head::before { right: 100%; border-right: 1px solid #7480a0; }
.page-head::after { left: 100%; border-left: 1px solid #7480a0; }
.page p { white-space: nowrap; text-align: justify; text-align-last: justify; }
.num { font-family: "Liberation Sans", sans-serif; letter-spacing: 0; line-height: 1; }
.picked { background: #727d99; padding-top: 14px; letter-spacing: -4px; }
.page .picked.last { width: 112px; padding: 0 0 14px; text-align-last: left; }
.plain { text-spacing-trim: space-all; }
.page .short { text-align-last: left; }
.para-tag { position: absolute; left: 43px; top: 102px; gap: 8px; }
.para-tag svg { width: 13px; height: 14px; }

.mini, .context { position: absolute; background: #fff; font: 12px/16px "Noto Sans", "Noto Sans CJK SC", sans-serif; color: #20283a; box-shadow: 0 1px 4px rgba(0,0,0,.35); }
.mini { left: 232px; top: 112px; width: 237px; padding: 1px 1px 2px; display: flex; flex-direction: column; gap: 2px; }
.mini .combo { width: 143px; margin-right: 2px; }
.mini .face { flex: none; width: 57px; }
.context { left: 228px; top: 184px; width: 253px; }
.m { display: flex; align-items: center; justify-content: flex-start; width: 100%; height: 28px; padding: 0 17px 0 7px; }
.m > span { flex: 1; text-align: left; padding-left: 10px; }
.m kbd { font: inherit; font-size: 13px; color: #7d8086; }
.m .vr { height: 16px; }
.side { width: 34px; height: 24px; }
.m .side:last-child { margin-right: -17px; padding-left: 4px; }
.context hr { margin: 3px 0 5px; border: 0; height: 1px; background: #e0e2e7; }
.more { border: 3px solid transparent; border-left: 4px solid #6f7c95; border-right: 0; margin: 0 -9px 0 12px; }
.pointer { position: absolute; left: 153px; top: 363px; width: 100px; height: 90px; filter: drop-shadow(2px 3px 2px rgba(0,0,0,.45)); }

/* Scrollbar */
.scroll { flex: none; width: 15px; display: flex; flex-direction: column; align-items: center; }
.chip { width: 10px; height: 12px; margin: 4px 0 2px; }
.bar { flex: 1; width: 100%; display: flex; flex-direction: column; align-items: center; background: #e9ebf0; padding: 9px 0 8px; }
.thumb { width: 12px; height: 168px; margin-top: 9px; border-radius: 6px; background: #d3d6e0; }
.jump { margin-top: auto; display: flex; flex-direction: column; align-items: center; gap: 10px; }
.jump svg { width: 8px; height: 8px; }

/* Style panel */
.panel { flex: none; width: 261px; border: solid #e2e4e9; border-width: 0 1px; padding: 0 12px 28px 11px; display: flex; flex-direction: column; color: #3b4356; }
.panel-top { display: flex; align-items: center; height: 31px; margin: 0 -6px 8px -3px; gap: 9px; }
.panel-top button { margin-right: auto; gap: 6px; }
.current { flex: none; height: 32px; margin-bottom: 7px; padding: 0 8px 0 7px; }
.current select { font: 700 20px/28px "Liberation Sans", "Noto Sans CJK SC", sans-serif; color: #000; }
.actions { display: flex; gap: 10px; margin-bottom: 20px; }
.actions button { width: 78px; height: 23px; border: 1px solid #d5d8de; background: #fff; }
.panel h2 { font-size: 14px; line-height: 20px; font-weight: 400; margin-bottom: 7px; }
.styles { flex: 1; min-height: 0; list-style: none; background: #fff; border: 1px solid #dcdfe4; border-radius: 2px; padding: 2px 12px 0 2px; margin-bottom: 7px; }
.styles li { display: flex; align-items: center; justify-content: space-between; height: 20px; margin: 1px 0 2px; padding: 0 5px 0 6px; border: 1px solid transparent; }
.styles .on { border-color: #4a90f2; }
.styles svg { width: 10px; height: 10px; margin-bottom: 6px; }
.styles u { color: #000; margin-bottom: 4px; padding-right: 1px; }
.show { display: flex; align-items: center; gap: 6px; margin-bottom: 11px; }
.show .combo { flex: 1; padding-left: 2px; padding-right: 5px; }
.foot { display: flex; align-items: center; justify-content: space-between; padding-right: 5px; }
.foot label, .foot a { display: flex; align-items: center; gap: 5px; color: #20283a; }
.foot a { color: #3f82f5; text-decoration: none; gap: 1px; }
.foot input { appearance: none; width: 13px; height: 13px; border: 1px solid #1b2130; background: #fff; }
.rail { flex: none; width: 43px; padding: 11px 6px 9px 5px; display: flex; flex-direction: column; align-items: center; gap: 4px; }
.rail button { width: 32px; height: 32px; border-radius: 2px; }
.rail .on { background: #dadfe6; }
.grip { width: 20px; height: 5px; margin-bottom: 8px; border: solid #cdd1d8; border-width: 1px 0; }
.rail .rest { margin-top: auto; width: 38px; height: 34px; border-top: 1px solid #dcdfe4; border-radius: 0; padding-top: 14px; }

/* Status bar */
.status { flex: none; display: flex; align-items: center; height: 30px; padding-right: 10px; border-top: 1px solid #dfe2e7; white-space: nowrap; background: #f5f7f9; }
.status span { padding: 0 6px 0 10px; }
.status .vr { height: 18px; }
.status > button { gap: 3px; padding: 0 4px 0 8px; }
.status > button .caret { margin-left: 3px; }
.status > .tight + button { padding-left: 3px; }
.views { margin-left: auto; display: flex; align-items: center; }
.views button { width: 26px; height: 24px; border-radius: 2px; }
.views .vr { margin: 0 8px; height: 14px; }
.views .on { background: #dadfe6; }
.views .zoom { width: 44px; gap: 6px; font-size: 13px; }
.views input { appearance: none; width: 144px; height: 16px; margin: 0 2px; background: linear-gradient(90deg, #45536f 58px, #d0d4dc 58px) 0 50% / 100% 1px no-repeat; }
.views input::-webkit-slider-thumb { appearance: none; width: 12px; height: 12px; border-radius: 50%; border: 1px solid #20283a; background: #f5f7f9; }
.views .step { width: 24px; }

.brand { position: fixed; right: 11px; bottom: 8px; display: flex; gap: 1px; opacity: .85; }
.brand svg { width: 44px; height: 42px; margin-top: 2px; }
.brand div { display: flex; flex-direction: column; }
.brand strong { font: 700 21px/26px "Noto Sans CJK SC", sans-serif; color: #5c9bd8; }
.brand span { font: 700 16px/16px "Liberation Sans", sans-serif; color: #66bf86; }
.meter { position: fixed; right: 0; bottom: 0; width: 10px; height: 31px; border: 3px solid #4c505b; border-right-width: 1px; border-top-width: 6px; border-radius: 3px 0 0 0; background: repeating-linear-gradient(#e8cf3c 0 1px, #4c505b 1px 3px); }
```
